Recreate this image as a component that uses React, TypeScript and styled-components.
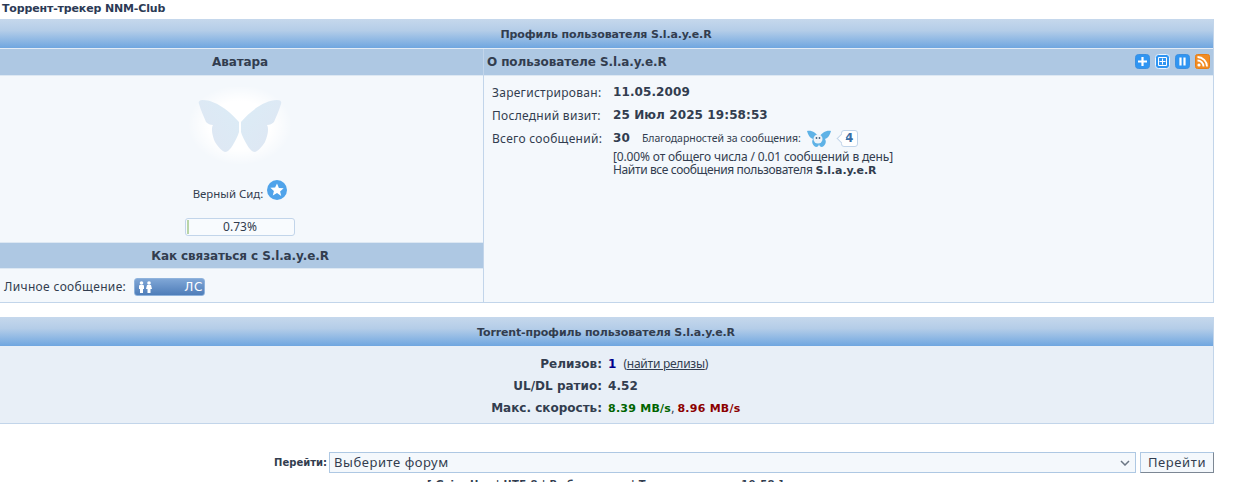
import React from "react";
import styled, { createGlobalStyle } from "styled-components";

const Global = createGlobalStyle`
  html, body { margin: 0; padding: 0; background: #fff; overflow: hidden; height: 482px; }
  body { font-family: "DejaVu Sans", Verdana, sans-serif; font-size: 12px; color: #323d4f; }
`;

const Page = styled.div`
  width: 1214px;
  height: 482px;
  overflow: hidden;
`;

const SiteTitle = styled.div`
  height: 19px;
  padding-left: 2px;
  font: bold 11px/17px "DejaVu Sans", sans-serif;
  letter-spacing: -0.15px;
  color: #2c3a55;
`;

const Panel = styled.section`
  border: solid #c2d5ea;
  border-width: 0 1px 1px 0;
  background: #f4f8fc;
`;

const GradientHead = styled.h2`
  margin: 0;
  height: 29px;
  padding: 1px 1px 0 0;
  box-sizing: border-box;
  display: flex;
  align-items: center;
  justify-content: center;
  background: linear-gradient(#c6d8ec, #b4cde8 40%, #6fa6e0);
  font: bold 11px/1 "DejaVu Sans", sans-serif;
  letter-spacing: -0.14px;
  color: #323d4f;
`;

const Columns = styled.div`
  display: grid;
  grid-template-columns: 484px 1fr;
  height: 253px;
  border-top: 1px solid #e3ecf6;
`;

const Left = styled.div`
  display: flex;
  flex-direction: column;
  border-right: 1px solid #c2d5ea;
`;

const Right = styled.div`
  display: flex;
  flex-direction: column;
`;

const SubHead = styled.div<{ $left?: boolean }>`
  flex: none;
  height: 26px;
  display: flex;
  align-items: center;
  justify-content: ${(p) => (p.$left ? "space-between" : "center")};
  padding: ${(p) => (p.$left ? "0 3px 0 3px" : "0 3px 0 0")};
  background: #aec8e3;
  border-bottom: 1px solid #dde8f3;
  font: bold 12px/1 "DejaVu Sans", sans-serif;
  letter-spacing: -0.1px;
  color: #323d4f;
`;

const AvatarCell = styled.div`
  height: 166px;
  flex: none;
  padding-right: 3px;
  display: flex;
  flex-direction: column;
  align-items: center;
`;

const Butterfly = styled.svg`
  margin-top: 11px;
  width: 110px;
  height: 78px;
  flex: none;
`;

const SeedRow = styled.div`
  margin-top: 15px;
  height: 25px;
  display: flex;
  align-items: flex-start;
  gap: 4px;
  flex: none;
`;

const SeedLabel = styled.span`
  font: 11.4px/24px Tahoma, "Noto Sans", sans-serif;
  margin-top: 2px;
`;

const Progress = styled.div`
  margin-top: 13px;
  width: 108px;
  height: 16px;
  border: 1px solid #c2d5ea;
  border-radius: 3px;
  background: #f8fbfe;
  position: relative;
  text-align: center;
  font: 12px/16px "Noto Sans", sans-serif;
  flex: none;
`;

const ProgressFill = styled.div`
  position: absolute;
  left: 1px;
  top: 1px;
  bottom: 1px;
  border: 1px solid #b9d5a8;
  background: #e9f3df;
`;

const ContactHead = styled(SubHead)`
  height: 25px;
  border-top: 1px solid #dde8f3;
`;

const ContactRow = styled.div`
  display: flex;
  align-items: center;
  gap: 8px;
  padding: 9px 0 0 4px;
  font: 12px/18px "Noto Sans", sans-serif;
  letter-spacing: 0.34px;
`;

const PmButton = styled.div`
  width: 71px;
  height: 18px;
  box-sizing: border-box;
  border-radius: 3px;
  background: linear-gradient(#7fa6d6, #4e7db9);
  border: 1px solid #8fb3dc;
  color: #fff;
  display: flex;
  align-items: center;
  justify-content: space-between;
  padding: 0 1px 0 3px;
  font: 12px/1 "DejaVu Sans", sans-serif;
  letter-spacing: 0.8px;
`;

const Icons = styled.div`
  display: flex;
  gap: 5px;
  margin-top: -1px;
`;

const IconBox = styled.svg`
  width: 15px;
  height: 15px;
  display: block;
`;

const Stats = styled.div`
  display: grid;
  grid-template-columns: 121px 1fr;
  padding: 5px 0 0 8px;
`;

const StatLabel = styled.div`
  font: 12px/23px "Noto Sans", sans-serif;
  letter-spacing: 0.28px;
  height: 23px;
`;

const StatValue = styled.div`
  font: bold 12px/23px "DejaVu Sans", sans-serif;
  letter-spacing: 0.1px;
  height: 23px;
  display: flex;
  align-items: center;
`;

const ThanksLabel = styled.span`
  font: 10.5px/1 "Noto Sans", sans-serif;
  margin-left: 12px;
  letter-spacing: -0.04px;
`;

const ThanksBubble = styled.span`
  position: relative;
  margin-left: 9px;
  width: 17px;
  height: 17px;
  box-sizing: border-box;
  border: 1px solid #c2d5ea;
  border-radius: 3px;
  background: #fff;
  color: #3b6ea5;
  font: bold 12px/15px "DejaVu Sans", sans-serif;
  text-align: center;
  &::before {
    content: "";
    position: absolute;
    left: -4px;
    top: 4px;
    width: 6px;
    height: 6px;
    background: #fff;
    border: solid #c2d5ea;
    border-width: 0 0 1px 1px;
    transform: rotate(45deg);
  }
`;

const ThanksFly = styled.svg`
  margin-left: 5px;
  width: 26px;
  height: 20px;
`;

const StatNote = styled.div`
  grid-column: 2;
  font: 12px/13px "Noto Sans", sans-serif;
  letter-spacing: -0.15px;
`;

const FindAll = styled.span`
  letter-spacing: -0.37px;
`;

const NoteName = styled.b`
  font: bold 11px/13px "DejaVu Sans", sans-serif;
  letter-spacing: -0.1px;
`;

const TorrentPanel = styled(Panel)`
  margin-top: 14px;
  background: #e8eff7;
`;

const TorrentBody = styled.div`
  height: 70px;
  padding-top: 7px;
  display: grid;
  grid-template-columns: 602px 1fr;
  grid-auto-rows: 22px;
  column-gap: 6px;
`;

const TLabel = styled.div`
  text-align: right;
  font: bold 12px/22px "DejaVu Sans", sans-serif;
`;

const TValue = styled.div`
  font: bold 12px/22px "DejaVu Sans", sans-serif;
  letter-spacing: 0.1px;
`;

const Coloured = styled.span<{ $c: string; $small?: boolean }>`
  color: ${(p) => p.$c};
  font-size: ${(p) => (p.$small ? "11px" : "12px")};
  letter-spacing: ${(p) => (p.$small ? "0.25px" : "0.1px")};
`;

const Comma = styled.span`
  font: 12px/22px "Noto Sans", sans-serif;
  margin-right: 3px;
`;

const FindLink = styled.span`
  font: 12px/22px "Noto Sans", sans-serif;
  margin-left: 7px;
  letter-spacing: -0.25px;
  a { color: inherit; text-decoration: underline; }
`;

const JumpRow = styled.form`
  margin: 28px 0 0;
  display: flex;
  justify-content: flex-end;
  align-items: center;
  height: 21px;
`;

const JumpLabel = styled.b`
  font: bold 10px/1 "DejaVu Sans", sans-serif;
  margin-right: 2px;
`;

const Select = styled.div`
  width: 807px;
  height: 21px;
  box-sizing: border-box;
  border: 1px solid #aec8e3;
  background: #f4f8fc;
  display: flex;
  align-items: center;
  justify-content: space-between;
  padding: 0 5px 0 4px;
  font: 13px/1 "Noto Sans", sans-serif;
  letter-spacing: 0.55px;
  svg { display: block; }
`;

const GoButton = styled.div`
  margin-left: 4px;
  width: 74px;
  height: 21px;
  box-sizing: border-box;
  border: 1px solid;
  border-color: #aec8e3 #7c8794 #7c8794 #aec8e3;
  background: #f4f8fc;
  text-align: center;
  font: 13px/18px "Noto Sans", sans-serif;
  letter-spacing: 0.6px;
`;

const Footer = styled.div`
  margin-top: 5px;
  padding-left: 427px;
  font: bold 10px/14px "DejaVu Sans", sans-serif;
  letter-spacing: 0.35px;
  white-space: nowrap;
`;

const Disc = ({ d, halo }: { d: React.ReactNode; halo?: boolean }) => (
  <IconBox viewBox="0 0 15 15">
    <rect x="0.5" y="0.5" width="14" height="14" rx="3" fill="#2f95f2" stroke={halo ? "#eaf4ff" : "#3b8fe0"} />
    {d}
  </IconBox>
);

const wing = "M54 35C45 24 30 13 18 13C15 13 13 14 14 17C16 24 19 30 21 35C23 37 25 38 28 38C26 41 27 48 30 55C33 60 37 64 40 65C44 65 48 59 53 48L54 45Z";

export default function App() {
  return (
    <Page>
      <Global />
      <SiteTitle>Торрент-трекер NNM-Club</SiteTitle>
      <Panel>
        <GradientHead>Профиль пользователя S.l.a.y.e.R</GradientHead>
        <Columns>
          <Left>
            <SubHead>Аватара</SubHead>
            <AvatarCell>
              <Butterfly viewBox="0 0 110 78">
                <defs>
                  <radialGradient id="glow">
                    <stop offset="0.6" stopColor="#fff" />
                    <stop offset="1" stopColor="#fff" stopOpacity="0" />
                  </radialGradient>
                  <linearGradient id="bf" x1="1" y1="0" x2="0" y2="1">
                    <stop offset="0" stopColor="#dbecf6" />
                    <stop offset="1" stopColor="#dfe6f3" />
                  </linearGradient>
                </defs>
                <ellipse cx="55" cy="38" rx="52" ry="40" fill="url(#glow)" />
                <g fill="url(#bf)">
                  <path d={wing} />
                  <path d={wing} transform="translate(110 0) scale(-1 1)" />
                </g>
              </Butterfly>
              <SeedRow>
                <SeedLabel>Верный Сид:</SeedLabel>
                <svg width="20" height="20" viewBox="0 0 20 20">
                  <circle cx="10" cy="10" r="10" fill="#4fa3ea" />
                  <path d="M10 3.500l1.900 4.400 4.800.4-3.600 3.100 1.100 4.700L10 13.100l-4.200 2.500 1.100-4.700-3.600-3.100 4.800-.4z" fill="#fff" />
                </svg>
              </SeedRow>
              <Progress>
                <ProgressFill />
                0.73%
              </Progress>
            </AvatarCell>
            <ContactHead>Как связаться с S.l.a.y.e.R</ContactHead>
            <ContactRow>
              Личное сообщение:
              <PmButton>
                <svg width="15" height="13" viewBox="0 0 15 13" fill="#fff">
                  <circle cx="3.500" cy="2" r="1.800" />
                  <path d="M1 5q0-1 1-1h3q1 0 1 1v3H5v4H2V8H1z" />
                  <circle cx="11" cy="2" r="1.800" />
                  <path d="M9 4h4l1 4h-1.500v4h-3V8H8z" />
                </svg>
                <span>ЛС</span>
              </PmButton>
            </ContactRow>
          </Left>
          <Right>
            <SubHead $left>
              О пользователе S.l.a.y.e.R
              <Icons>
                <Disc d={<path d="M7.500 3v9M3 7.500h9" stroke="#fff" strokeWidth="2.200" />} />
                <Disc halo d={<path d="M3.500 3.500h8v8h-8zM7.500 4.500v6M4.500 7.500h6" stroke="#fff" strokeWidth="1" fill="none" />} />
                <Disc d={<path d="M5.500 3.500v8M9.500 3.500v8" stroke="#fff" strokeWidth="2.200" />} />
                <IconBox viewBox="0 0 15 15">
                  <rect x="0.5" y="0.5" width="14" height="14" rx="2" fill="#f28c23" stroke="#e67f17" />
                  <circle cx="4" cy="11" r="1.600" fill="#fff" />
                  <path d="M2.500 6.500a6 6 0 0 1 6 6M2.500 3a9.500 9.500 0 0 1 9.500 9.500" fill="none" stroke="#fff" strokeWidth="1.800" />
                </IconBox>
              </Icons>
            </SubHead>
            <Stats>
              <StatLabel>Зарегистрирован:</StatLabel>
              <StatValue>11.05.2009</StatValue>
              <StatLabel>Последний визит:</StatLabel>
              <StatValue>25 Июл 2025 19:58:53</StatValue>
              <StatLabel>Всего сообщений:</StatLabel>
              <StatValue>
                30
                <ThanksLabel>Благодарностей за сообщения:</ThanksLabel>
                <ThanksFly viewBox="0 0 26 20">
                  <path d="M1 2c5-1 9 2 12 6 3-4 7-7 12-6-1 4-3 7-6 8 2 3 0 7-3 8-2 0-3-2-3-3 0 1-1 3-3 3-3-1-5-5-3-8C4 9 2 6 1 2z" fill="#5eb2e6" />
                  <circle cx="12" cy="10" r="4.500" fill="#eef3f8" />
                  <circle cx="10.500" cy="9" r="0.900" fill="#46627e" />
                  <circle cx="13.500" cy="9" r="0.900" fill="#46627e" />
                </ThanksFly>
                <ThanksBubble>4</ThanksBubble>
              </StatValue>
              <StatNote>
                [0.00% от общего числа / 0.01 сообщений в день]
                <br />
                <FindAll>Найти все сообщения пользователя</FindAll> <NoteName>S.l.a.y.e.R</NoteName>
              </StatNote>
            </Stats>
          </Right>
        </Columns>
      </Panel>
      <TorrentPanel>
        <GradientHead>Torrent-профиль пользователя S.l.a.y.e.R</GradientHead>
        <TorrentBody>
          <TLabel>Релизов:</TLabel>
          <TValue>
            <Coloured $c="#00008b">1</Coloured>
            <FindLink>
              (<a>найти релизы</a>)
            </FindLink>
          </TValue>
          <TLabel>UL/DL ратио:</TLabel>
          <TValue>4.52</TValue>
          <TLabel>Макс. скорость:</TLabel>
          <TValue>
            <Coloured $c="#006400" $small>8.39 MB/s</Coloured>
            <Comma>,</Comma>
            <Coloured $c="#8b0000" $small>8.96 MB/s</Coloured>
          </TValue>
        </TorrentBody>
      </TorrentPanel>
      <JumpRow>
        <JumpLabel>Перейти:</JumpLabel>
        <Select>
          Выберите форум
          <svg width="10" height="6" viewBox="0 0 10 6">
            <path d="M1 1l4 4 4-4" fill="none" stroke="#6b7684" strokeWidth="1.500" />
          </svg>
        </Select>
        <GoButton>Перейти</GoButton>
      </JumpRow>
      <Footer>[ Gzip: Нет | UTF-8 | Выбор стиля | Текущее время: 19:58 ]</Footer>
    </Page>
  );
}
